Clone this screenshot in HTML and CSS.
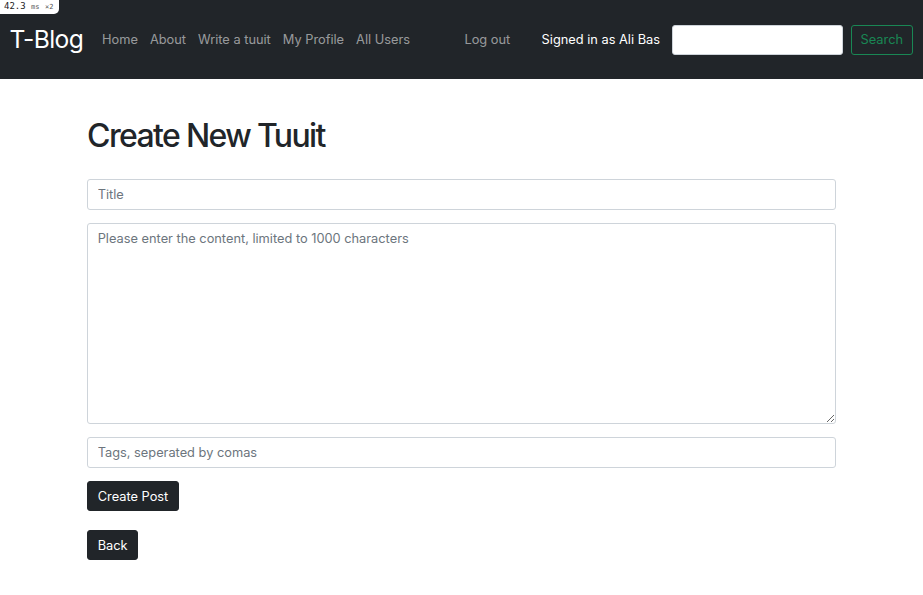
FILE: index.html
```html
<!DOCTYPE html>
<html lang="en">
<head>
<meta charset="utf-8">
<title>Create New Tuuit - T-Blog</title>
<link rel="stylesheet" href="styles.css">
</head>
<body>
<div class="perf-badge">42.3 <span class="unit">ms</span> <span class="unit">×2</span></div>
<nav class="navbar">
  <a class="brand" href="#">T-Blog</a>
  <ul class="nav-main">
    <li><a class="nav-link" href="#">Home</a></li>
    <li><a class="nav-link" href="#">About</a></li>
    <li><a class="nav-link" href="#">Write a tuuit</a></li>
    <li><a class="nav-link" href="#">My Profile</a></li>
    <li><a class="nav-link" href="#">All Users</a></li>
  </ul>
  <ul class="nav-user">
    <li><a class="nav-link" href="#">Log out</a></li>
  </ul>
  <span class="nav-text">Signed in as Ali Bas</span>
  <form class="search">
    <input class="search-input" type="search" aria-label="Search">
    <button class="btn-outline-success" type="button">Search</button>
  </form>
</nav>
<main class="container">
  <h1 class="page-title">Create New Tuuit</h1>
  <form class="post-form">
    <input class="form-control" type="text" placeholder="Title">
    <textarea class="form-control textarea" placeholder="Please enter the content, limited to 1000 characters"></textarea>
    <input class="form-control" type="text" placeholder="Tags, seperated by comas">
    <div><button class="btn-dark" type="button">Create Post</button></div>
  </form>
  <div class="back-row"><button class="btn-dark" type="button">Back</button></div>
</main>
</body>
</html>
```
FILE: styles.css
```css
* { box-sizing: border-box; }
html, body { margin: 0; padding: 0; }
body {
  font-family: Inter, "Noto Sans", "Liberation Sans", sans-serif;
  font-size: 12.8px;
  line-height: 1.5;
  color: #212529;
  background: #fff;
}
.perf-badge {
  position: absolute;
  top: 0;
  left: 0;
  z-index: 10;
  background: #fff;
  color: #222;
  font-family: "DejaVu Sans Mono", "Liberation Mono", monospace;
  font-size: 9px;
  line-height: 13px;
  padding: 0 6px 0 4px;
  border-bottom-right-radius: 5px;
  white-space: nowrap;
}
.perf-badge .unit { font-size: 7px; color: #555; }
.navbar {
  display: flex;
  align-items: center;
  height: 79px;
  padding: 0 9.6px;
  background: #212529;
  white-space: nowrap;
}
.navbar > * { flex-shrink: 0; }
.brand {
  font-size: 24.6px;
  letter-spacing: -0.6px;
  color: #fff;
  text-decoration: none;
  margin-right: 12.8px;
  line-height: 1.5;
}
ul { list-style: none; margin: 0; padding: 0; display: flex; }
.nav-link {
  display: block;
  padding: 6.4px;
  color: rgba(255,255,255,.55);
  text-decoration: none;
}
.nav-main .nav-link { padding: 6.4px 6px; }
.nav-user { margin-left: 42px; }
.nav-text { color: #fff; margin-left: 25px; }
.search { display: flex; align-items: center; margin-left: 12px; }
.search-input {
  width: 171px;
  height: 30px;
  border: 1px solid #ced4da;
  border-radius: 3px;
  background: #fff;
  margin-right: 8px;
}
.btn-outline-success {
  height: 30px;
  padding: 0 8.6px;
  font: inherit;
  color: #198754;
  background: transparent;
  border: 1px solid #198754;
  border-radius: 3px;
}
.container {
  width: 768px;
  margin: 0 auto;
  padding: 0 9.6px;
}
.page-title {
  font-size: 32px;
  font-weight: 500;
  letter-spacing: -1.65px;
  line-height: 1.2;
  margin: 38px 0 24px;
}
.post-form { display: flex; flex-direction: column; gap: 13px; }
.form-control {
  display: block;
  width: 100%;
  height: 31px;
  padding: 4.8px 9.6px;
  font: inherit;
  color: #212529;
  border: 1px solid #ced4da;
  border-radius: 3px;
  background: #fff;
}
.form-control::placeholder { color: #6c757d; }
.textarea { height: 201px; resize: vertical; }
.btn-dark {
  height: 30px;
  padding: 0 9.6px;
  font: inherit;
  color: #fff;
  background: #212529;
  border: 1px solid #212529;
  border-radius: 3px;
}
.back-row { margin-top: 19px; }
```
